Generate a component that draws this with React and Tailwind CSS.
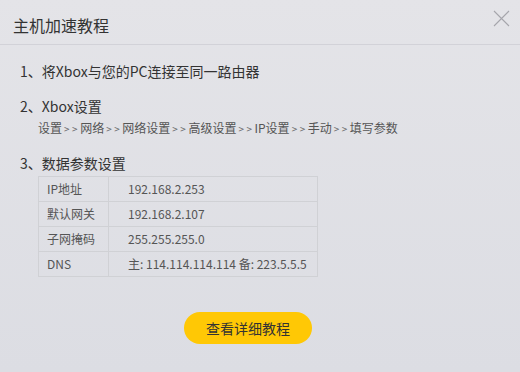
const rows = [
  ['IP地址', '192.168.2.253'],
  ['默认网关', '192.168.2.107'],
  ['子网掩码', '255.255.255.0'],
  ['DNS', '主: 114.114.114.114 备: 223.5.5.5'],
]

const path = ['设置', '网络', '网络设置', '高级设置', 'IP设置', '手动', '填写参数']

export default function App() {
  return (
    <div
      className="relative w-[520px] h-[372px] overflow-hidden bg-gradient-to-b from-[#e4e4e8] to-[#dcdde3] text-[#333]"
      style={{ fontFamily: '"Noto Sans CJK SC", "Noto Sans", sans-serif' }}
    >
      <div className="h-[45px] flex items-center pl-[13px] border-b border-[#d2d2d8]">
        <h1 className="text-[16px] text-[#333] leading-none mt-[6px]">主机加速教程</h1>
      </div>
      {/* close */}
      <button className="absolute left-[493px] top-[10px] text-[#a6a6ac]">
        <svg width="17" height="17" viewBox="0 0 17 17" fill="none" stroke="currentColor" strokeWidth="1.1">
          <path d="M1 1L16 16M16 1L1 16" />
        </svg>
      </button>

      <div className="pl-[20px] pt-[16px]">
        <p className="text-[14px] leading-[20px]">1、将Xbox与您的PC连接至同一路由器</p>

        <p className="text-[14px] leading-[20px] mt-[15px]">2、Xbox设置</p>
        <p className="text-[12px] leading-[18px] text-[#555] ml-[18px] mt-[3px] whitespace-nowrap">
          {path.map((s, i) => (
            <span key={s}>
              {s}
              {i < path.length - 1 && (
                <span className="text-[10px] tracking-[2.5px] ml-[2px] text-[#666]">&gt;&gt;</span>
              )}
            </span>
          ))}
        </p>

        <p className="text-[14px] leading-[20px] mt-[15px]">3、数据参数设置</p>
        <table className="ml-[18px] mt-[3px] w-[280px] border-collapse text-[12px] text-[#555]">
          <tbody>
            {rows.map(([k, v]) => (
              <tr key={k} className="h-[25px]">
                <td className="w-[70px] border border-[#d0d1d5] pl-[8px] leading-none">{k}</td>
                <td className="border border-[#d0d1d5] pl-[19px] leading-none">{v}</td>
              </tr>
            ))}
          </tbody>
        </table>
      </div>

      <div className="flex justify-center mt-[35px] pr-[24px]">
        <button className="h-[32px] w-[128px] rounded-full bg-[#ffc805] text-[14px] text-[#333]">
          查看详细教程
        </button>
      </div>
    </div>
  )
}
